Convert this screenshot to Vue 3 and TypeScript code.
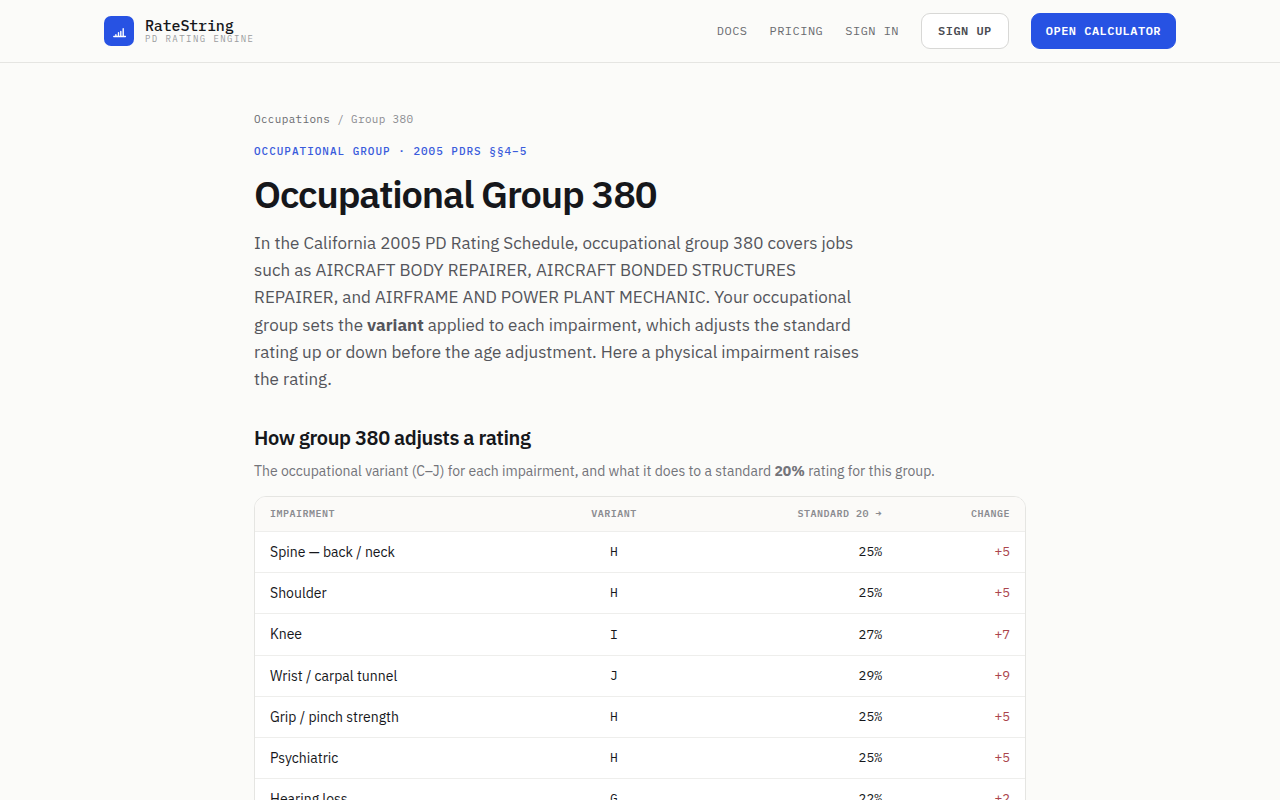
<script setup lang="ts">
interface Row {
  impairment: string
  variant: string
  rating: number
}

const standard = 20
const rows: Row[] = [
  { impairment: 'Spine — back / neck', variant: 'H', rating: 25 },
  { impairment: 'Shoulder', variant: 'H', rating: 25 },
  { impairment: 'Knee', variant: 'I', rating: 27 },
  { impairment: 'Wrist / carpal tunnel', variant: 'J', rating: 29 },
  { impairment: 'Grip / pinch strength', variant: 'H', rating: 25 },
  { impairment: 'Psychiatric', variant: 'H', rating: 25 },
  { impairment: 'Hearing loss', variant: 'G', rating: 22 },
]
</script>

<template>
  <header class="site-header">
    <div class="header-inner">
      <a class="brand" href="#">
        <svg class="logo" viewBox="0 0 30 30" aria-hidden="true">
          <rect width="30" height="30" rx="7" fill="#2752e3" />
          <path
            d="M9.8 20.5H21.4M11.9 20v-1.2M14.5 20v-3.2M16.8 20v-4.6M19.2 20v-7.2"
            fill="none"
            stroke="#fff"
            stroke-width="1.4"
            stroke-linecap="round"
          />
        </svg>
        <span class="brand-text">
          <span class="brand-name">RateString</span>
          <span class="brand-tag">PD RATING ENGINE</span>
        </span>
      </a>
      <nav class="nav">
        <a href="#">DOCS</a>
        <a href="#">PRICING</a>
        <a href="#">SIGN IN</a>
        <a class="btn" href="#">SIGN UP</a>
        <a class="btn primary" href="#">OPEN CALCULATOR</a>
      </nav>
    </div>
  </header>
  <main class="content">
    <nav class="crumbs" aria-label="Breadcrumb">
      <a href="#">Occupations</a> / Group 380
    </nav>
    <p class="eyebrow">OCCUPATIONAL GROUP · 2005 PDRS §§4–5</p>
    <h1>Occupational Group 380</h1>
    <p class="lead">
      In the California 2005 PD Rating Schedule, occupational group 380 covers jobs such as AIRCRAFT
      BODY REPAIRER, AIRCRAFT BONDED STRUCTURES REPAIRER, and AIRFRAME AND POWER PLANT MECHANIC. Your
      occupational group sets the <strong>variant</strong> applied to each impairment, which adjusts
      the standard rating up or down before the age adjustment. Here a physical impairment raises the
      rating.
    </p>
    <h2>How group 380 adjusts a rating</h2>
    <p class="note">
      The occupational variant (C–J) for each impairment, and what it does to a standard
      <strong>20%</strong> rating for this group.
    </p>
    <div class="card">
      <table>
        <thead>
          <tr>
            <th class="name">IMPAIRMENT</th>
            <th class="variant">VARIANT</th>
            <th class="rating">STANDARD 20 →</th>
            <th class="change">CHANGE</th>
          </tr>
        </thead>
        <tbody>
          <tr v-for="row in rows" :key="row.impairment">
            <td class="name">{{ row.impairment }}</td>
            <td class="variant">{{ row.variant }}</td>
            <td class="rating">{{ row.rating }}%</td>
            <td class="change">+{{ row.rating - standard }}</td>
          </tr>
        </tbody>
      </table>
    </div>
  </main>
</template>

<style>
body {
  margin: 0;
  background: #fbfbf9;
}
html {
  scrollbar-width: none;
}
</style>

<style scoped>
.site-header,
.content {
  --mono: 'IBM Plex Mono', 'Liberation Mono', monospace;
  --sans: 'IBM Plex Sans', Roboto, sans-serif;
  font-family: var(--sans);
  color: #16171b;
}
.site-header {
  border-bottom: 1px solid #e5e5e2;
}
.header-inner {
  box-sizing: border-box;
  max-width: 1120px;
  min-height: 62px;
  margin: 0 auto;
  padding: 0 24px;
  display: flex;
  align-items: center;
  justify-content: space-between;
}
a {
  color: inherit;
  text-decoration: none;
}
.brand {
  display: flex;
  align-items: center;
  gap: 11px;
  font-family: var(--mono);
}
.logo {
  width: 30px;
  height: 30px;
}
.brand-text {
  display: flex;
  flex-direction: column;
}
.brand-name {
  font-size: 15px;
  line-height: 16px;
  font-weight: 500;
  letter-spacing: -0.01em;
}
.brand-tag {
  font-size: 9px;
  line-height: 10px;
  letter-spacing: 0.16em;
  color: #9a9b9e;
}
.nav {
  display: flex;
  align-items: center;
  gap: 22px;
  font-family: var(--mono);
  font-size: 12px;
  line-height: 18px;
  letter-spacing: 0.04em;
  color: #6a6b70;
}
.btn {
  padding: 8px 16px;
  border: 1px solid #d8d8d6;
  border-radius: 9px;
  background: #fff;
  color: #4a4b51;
  font-weight: 600;
}
.primary {
  padding: 8px 14px;
  border-color: #2752e3;
  background: #2752e3;
  color: #fff;
}
.content {
  box-sizing: border-box;
  max-width: 820px;
  margin: 0 auto;
  padding: 48px 24px;
}
.crumbs {
  font-family: var(--mono);
  font-size: 11px;
  line-height: 16px;
  letter-spacing: 0.03em;
  color: #8b8c91;
}
.crumbs a {
  color: #6a6b70;
}
.eyebrow {
  margin: 16px 0 0;
  font-family: var(--mono);
  font-size: 11px;
  line-height: 16px;
  font-weight: 500;
  letter-spacing: 0.09em;
  color: #3a5bdc;
}
h1 {
  margin: 11px 0 0;
  font-size: 38px;
  line-height: 48px;
  font-weight: 600;
  letter-spacing: -0.03em;
}
.lead {
  max-width: 620px;
  margin: 12px 0 0;
  font-size: 17px;
  line-height: 1.6;
  color: #54555b;
}
h2 {
  margin: 31px 0 0;
  font-size: 20px;
  line-height: 28px;
  font-weight: 600;
  letter-spacing: -0.02em;
}
.note {
  margin: 9px 0 15px;
  font-size: 14px;
  line-height: 20px;
  color: #73747a;
}
.card {
  overflow: hidden;
  border: 1px solid #e5e5e2;
  border-radius: 12px;
  background: #fff;
}
table {
  width: 100%;
  border-collapse: collapse;
  table-layout: fixed;
}
th,
td {
  padding: 10px 15px;
  border-bottom: 1px solid #eeeeec;
  font-size: 13px;
  line-height: 20px;
  text-align: right;
  font-family: var(--mono);
}
th {
  padding: 9px 15px;
  background: #fbfaf8;
  font-size: 10px;
  line-height: 16px;
  font-weight: 600;
  letter-spacing: 0.05em;
  color: #8b8c91;
}
.name {
  text-align: left;
}
td.name {
  font-family: var(--sans);
  font-size: 14px;
  line-height: 1.44;
}
.variant {
  width: 110px;
  text-align: center;
}
.rating {
  width: 183px;
}
.change {
  width: 98px;
}
td.change {
  color: #ab454c;
}
</style>
